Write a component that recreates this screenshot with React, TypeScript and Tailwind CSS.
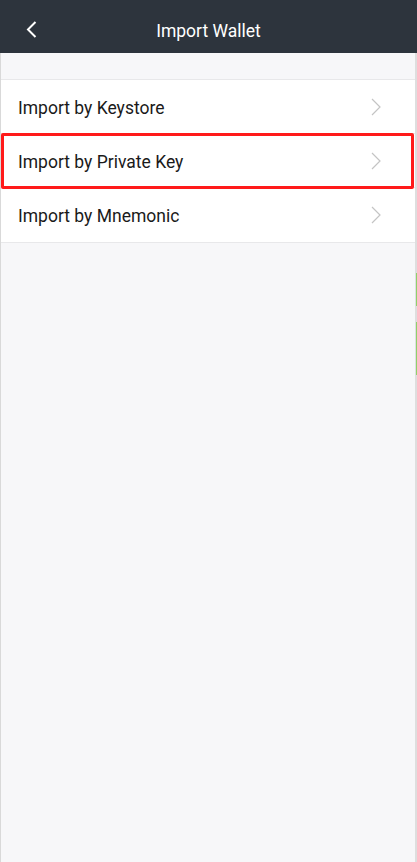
import React from "react";

function Chevron() {
  return (
    <svg width="10" height="18" viewBox="0 0 10 18" fill="none">
      <path d="M1 1 L9 9 L1 17" stroke="#c4c4c4" strokeWidth="1.2" />
    </svg>
  );
}

function Row({ label, highlight, last }: { label: string; highlight?: boolean; last?: boolean }) {
  return (
    <div className={`relative h-[54px] flex items-center justify-between pl-[17px] pr-[34px] ${last ? "" : "border-b border-[#e8e8ea]"}`}>
      <span className="text-[17.5px] text-[#1a1a1a] mt-[3px]">{label}</span>
      <Chevron />
      {highlight && (
        <div className="absolute left-[0px] right-[1px] top-[-1px] bottom-[-2px] border-[3px] border-[#ff1a1a] rounded-[2px]" />
      )}
    </div>
  );
}

export default function App() {
  return (
    <div className="w-[417px] h-[862px] bg-[#f7f7f9] flex flex-col relative" style={{ fontFamily: "Roboto, 'Noto Sans', sans-serif" }}>
      <div className="h-[53px] bg-[#2d343d] flex items-center justify-center relative shrink-0">
        <div className="absolute left-[26px] top-[21px]">
          <svg width="11" height="17" viewBox="0 0 11 17" fill="none">
            <path d="M9.5 1 L2 8.5 L9.5 16" stroke="#ffffff" strokeWidth="2" />
          </svg>
        </div>
        <span className="text-white text-[17.5px] mt-[9px]">Import Wallet</span>
      </div>
      <div className="flex-1 flex flex-col border-l border-[#d9d9d9] border-r-2 border-r-[#dedede]">
        <div className="h-[27px] border-b border-[#e8e8ea]" />
        <div className="bg-white border-b border-[#e8e8ea]">
          <Row label="Import by Keystore" />
          <Row label="Import by Private Key" highlight />
          <Row label="Import by Mnemonic" last />
        </div>
      </div>
      <div className="absolute right-0 top-[273px] w-[1px] h-[33px] bg-[#8fd16a]" />
      <div className="absolute right-0 top-[322px] w-[1px] h-[53px] bg-[#8fd16a]" />
    </div>
  );
}
